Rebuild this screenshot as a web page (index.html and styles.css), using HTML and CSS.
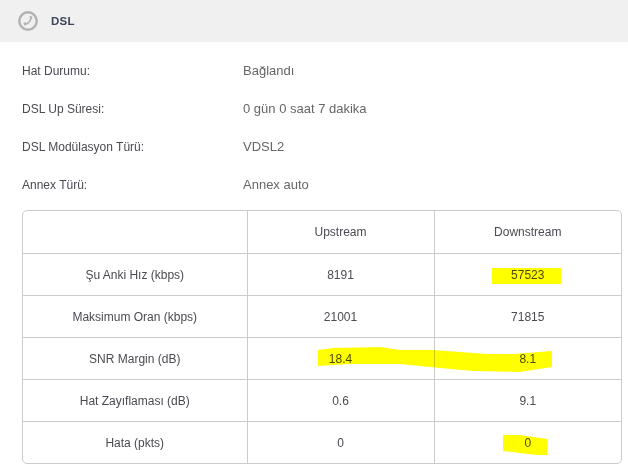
FILE: index.html
```html
<!DOCTYPE html>
<html lang="tr">
<head>
<meta charset="utf-8">
<title>DSL</title>
<link rel="stylesheet" href="styles.css">
</head>
<body>
<div class="page">
  <header class="head">
    <svg class="head-icon" width="20" height="20" viewBox="0 0 20 20">
      <circle cx="10" cy="10" r="8.7" fill="none" stroke="#b2b2b2" stroke-width="2.4"/>
      <path d="M13 6.2 C13.2 9.6 10 13 6.4 13.4" fill="none" stroke="#b2b2b2" stroke-width="1.6"/>
      <path d="M11.4 5.4 L13.2 4.9 L14.6 6.6 L12.6 8.2 Z M5.2 12 L7.4 11 L8.2 13 L6.8 14.8 Z" fill="#b2b2b2"/>
    </svg>
    <span class="head-title">DSL</span>
  </header>
  <dl class="info">
    <div class="info-row"><dt>Hat Durumu:</dt><dd>Bağlandı</dd></div>
    <div class="info-row"><dt>DSL Up Süresi:</dt><dd>0 gün 0 saat 7 dakika</dd></div>
    <div class="info-row"><dt>DSL Modülasyon Türü:</dt><dd>VDSL2</dd></div>
    <div class="info-row"><dt>Annex Türü:</dt><dd>Annex auto</dd></div>
  </dl>
  <div class="table-wrap">
    <table class="stats">
      <tr class="row-head"><th></th><th>Upstream</th><th>Downstream</th></tr>
      <tr><td>Şu Anki Hız (kbps)</td><td>8191</td><td>57523</td></tr>
      <tr><td>Maksimum Oran (kbps)</td><td>21001</td><td>71815</td></tr>
      <tr><td>SNR Margin (dB)</td><td>18.4</td><td>8.1</td></tr>
      <tr><td>Hat Zayıflaması (dB)</td><td>0.6</td><td>9.1</td></tr>
      <tr><td>Hata (pkts)</td><td>0</td><td>0</td></tr>
    </table>
  </div>
  <svg class="marker" width="628" height="474" viewBox="0 0 628 474">
    <path fill="#ffff00" d="M492 268 H561 V284 H492 Z"/>
    <path fill="#ffff00" d="M318 350 L333 348 L380 347 L400 350 L433 350 L460 352 L487 354 L513 354 L552 351 L552 367 L520 372 L473 371 L440 368 L400 364 L350 364 L318 366 Z"/>
    <path fill="#ffff00" d="M503 435 L520 435 L547 439 L547 455 L537 455 L520 453 L503 451 Z"/>
  </svg>
</div>
</body>
</html>
```
FILE: styles.css
```css
* { box-sizing: border-box; }
html, body { margin: 0; padding: 0; background: #fff; }
body {
  width: 628px;
  height: 474px;
  overflow: hidden;
  font-family: "Liberation Sans", Arial, sans-serif;
  font-size: 12px;
  color: #4a4a52;
}
.page { position: relative; width: 628px; height: 474px; }
.head {
  display: flex;
  align-items: center;
  height: 42px;
  padding-left: 18px;
  background: #f0f0f0;
}
.head-icon { flex: none; margin-right: 13px; }
.head-title { font-weight: 700; font-size: 11.5px; letter-spacing: 0.3px; color: #3f4658; }
.info { margin: 0; padding: 9px 0 0 22px; }
.info-row { display: flex; align-items: baseline; height: 38px; padding-top: 12px; }
.info-row dt { width: 221px; }
.info-row dd { margin: 0; font-size: 13px; color: #666666; }
.table-wrap {
  margin: 7px 0 0 22px;
  width: 600px;
  height: 254px;
  border: 1px solid #cccccc;
  border-radius: 5px;
  overflow: hidden;
}
.stats {
  width: 598px;
  border-collapse: collapse;
  table-layout: fixed;
}
.stats th, .stats td {
  height: 42px;
  padding: 1px 0 0;
  text-align: center;
  font-weight: 400;
  border-left: 1px solid #cccccc;
  border-top: 1px solid #cccccc;
}
.stats th:first-child, .stats td:first-child { border-left: 0; width: 224px; }
.stats th:nth-child(2), .stats td:nth-child(2) { width: 187px; }
.stats .row-head th { border-top: 0; height: 42px; padding: 0; }
.marker { position: absolute; left: 0; top: 0; mix-blend-mode: multiply; pointer-events: none; }
```
